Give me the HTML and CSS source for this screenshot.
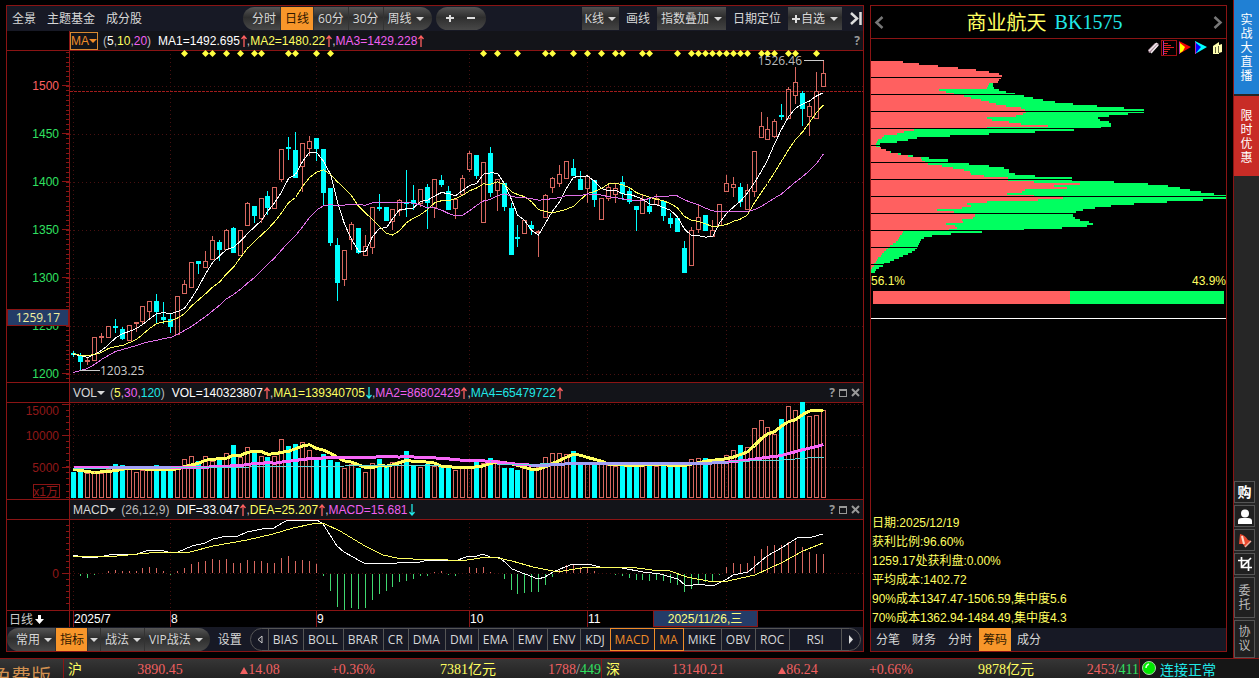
FILE: index.html
```html
<!DOCTYPE html>
<html lang="zh-CN">
<head>
<meta charset="utf-8">
<title>商业航天 BK1575</title>
<link rel="stylesheet" href="styles.css">
</head>
<body>
<svg class="defs" width="0" height="0">
  <symbol id="rise" viewBox="0 0 6 12"><path d="M3 1v11M0.500 4l2.500-3 2.500 3" fill="none" stroke="currentColor" stroke-width="1.300"/></symbol>
  <symbol id="fall" viewBox="0 0 6 12"><path d="M3 0v11M0.500 8l2.500 3 2.500-3" fill="none" stroke="currentColor" stroke-width="1.300"/></symbol>
</svg>
<div class="workspace">
  <main class="panel charts">
    <nav class="toolbar">
      <button class="plain">全景</button>
      <button class="plain">主题基金</button>
      <button class="plain">成分股</button>
      <div class="pill periods">
        <button>分时</button><button class="on">日线</button><button>60分</button><button>30分</button><button>周线<i class="caret"></i></button>
      </div>
      <div class="pill zoomers"><button aria-label="放大"><svg width="9" height="9"><path d="M3 1h2v2h3v2h-3v3h-2v-3h-3v-2h3z"/></svg></button><button aria-label="缩小"><svg width="9" height="9"><path d="M0 3h8v2h-8z"/></svg></button></div>
      <div class="actions">
        <button class="drop tight">K线<i class="caret"></i></button>
        <button class="plain">画线</button>
        <button class="drop">指数叠加<i class="caret"></i></button>
        <button class="plain">日期定位</button>
        <button class="drop"><svg width="9" height="8"><path d="M3 0h2v3h3v2h-3v3h-2v-3h-3v-2h3z"/></svg>自选<i class="caret"></i></button>
        <button class="plain collapse" aria-label="收起"><svg width="12" height="13"><path d="M1 1l6 5.500l-6 5.500M10.500 0v13" fill="none" stroke="#ddd" stroke-width="2.500"/></svg></button>
      </div>
    </nav>

    <header class="readout">
      <button class="name boxed">MA<i class="caret"></i></button>
      <span class="params dim">(<b class="w">5</b>,<b class="y">10</b>,<b class="m">20</b>)</span>
      <span class="values"><b class="w">MA1=1492.695</b><svg class="arrow r"><use href="#rise"/></svg>,<b class="y">MA2=1480.22</b><svg class="arrow r"><use href="#rise"/></svg>,<b class="m">MA3=1429.228</b><svg class="arrow r"><use href="#rise"/></svg></span>
      <span class="tools"><button aria-label="帮助">?</button></span>
    </header>
    <svg class="plot price" id="price"></svg>

    <header class="readout">
      <button class="name">VOL<i class="caret"></i></button>
      <span class="params dim">(<b class="y">5</b>,<b class="m">30</b>,<b class="c">120</b>)</span>
      <span class="values"><b class="w">VOL=140323807</b><svg class="arrow r"><use href="#rise"/></svg>,<b class="y">MA1=139340705</b><svg class="arrow c"><use href="#fall"/></svg>,<b class="m">MA2=86802429</b><svg class="arrow r"><use href="#rise"/></svg>,<b class="c">MA4=65479722</b><svg class="arrow r"><use href="#rise"/></svg></span>
      <span class="tools"><button aria-label="帮助">?</button><button aria-label="最大化"><svg width="8" height="8"><path d="M0 0h8v8h-8zM1 2v5h6v-5z" fill-rule="evenodd"/></svg></button><button aria-label="关闭"><svg width="9" height="9"><path d="M1 1l7 7M8 1l-7 7" stroke="#999" stroke-width="2"/></svg></button></span>
    </header>
    <svg class="plot volume" id="volume"></svg>

    <header class="readout">
      <button class="name">MACD<i class="caret"></i></button>
      <span class="params dim">(26,12,9)</span>
      <span class="values"><b class="w">DIF=33.047</b><svg class="arrow r"><use href="#rise"/></svg>,<b class="y">DEA=25.207</b><svg class="arrow r"><use href="#rise"/></svg>,<b class="m">MACD=15.681</b><svg class="arrow c"><use href="#fall"/></svg></span>
      <span class="tools"><button aria-label="帮助">?</button><button aria-label="最大化"><svg width="8" height="8"><path d="M0 0h8v8h-8zM1 2v5h6v-5z" fill-rule="evenodd"/></svg></button><button aria-label="关闭"><svg width="9" height="9"><path d="M1 1l7 7M8 1l-7 7" stroke="#999" stroke-width="2"/></svg></button></span>
    </header>
    <svg class="plot macd" id="macd"></svg>
    <svg class="plot dates" id="dates"></svg>

    <nav class="toolbar lower">
      <div class="pill groups">
        <button>常用<i class="caret"></i></button><button class="on">指标</button><button class="slim" aria-label="更多指标"><i class="caret"></i></button><button>战法<i class="caret"></i></button><button>VIP战法<i class="caret"></i></button>
      </div>
      <button class="plain">设置</button>
      <div class="indicators">
        <button class="prev" aria-label="向左"><svg width="6" height="9"><path d="M5 1v7l-4-3.500z" fill="none" stroke="#ccc"/></svg></button><button>BIAS</button><button>BOLL</button><button>BRAR</button><button>CR</button><button>DMA</button><button>DMI</button><button>EMA</button><button>EMV</button><button>ENV</button><button>KDJ</button><button class="picked">MACD</button><button class="picked">MA</button><button>MIKE</button><button>OBV</button><button>ROC</button><button class="wide">RSI</button><button class="next" aria-label="向右"><svg width="6" height="9"><path d="M1 0v9l4-4.500z" fill="#ddd"/></svg></button>
      </div>
    </nav>
  </main>

  <aside class="panel chips">
    <header class="stock">
      <button aria-label="上一个"><svg width="10" height="13"><path d="M8.500 1l-6 5.500l6 5.500" fill="none" stroke="#777" stroke-width="2.500"/></svg></button>
      <h1>商业航天<span>BK1575</span></h1>
      <button aria-label="下一个"><svg width="10" height="13"><path d="M1.500 1l6 5.500l-6 5.500" fill="none" stroke="#777" stroke-width="2.500"/></svg></button>
    </header>
    <div class="chip-tools">
      <button aria-label="编辑"><svg width="16" height="16"><path d="M4 13l-1-3 7-7 3 0 1 2-7 7z" fill="#a08090"/><path d="M4 11l8-8M6 13l7-8" stroke="#f0e8ec" stroke-width="1.500"/></svg></button>
      <button class="sel" aria-label="筹码分布"><svg width="14" height="14"><path d="M1.500 0v14" stroke="#b030b0"/><path d="M2 2.500h4M2 4.500h7M2 6.500h10M2 8.500h6M2 10.500h4M2 12.500h3" stroke="#e02020"/></svg></button>
      <button aria-label="远期成本"><svg width="16" height="16"><path d="M2 1l12 6-12 7z" fill="#f00000"/><path d="M3 3l5 4-2 4-3 2z" fill="#ff0"/><path d="M2.500 2v12" stroke="#b030b0"/></svg></button>
      <button aria-label="近期成本"><svg width="16" height="16"><path d="M2 1l12 6-12 7z" fill="#0ff"/><path d="M3 3l5 4-5 6z" fill="#00f"/><path d="M2.500 2v12" stroke="#b030b0"/></svg></button>
      <button aria-label="设置"><svg width="16" height="16"><path d="M4 6l6-4v3l3-1v8l-3 1v1l-6 0z" fill="#ffffb0"/><path d="M6.500 7v6M9.500 6v7" stroke="#666640"/></svg></button>
    </div>
    <svg class="profile" id="profile"></svg>
    <div class="split-labels"><span>56.1%</span><span>43.9%</span></div>
    <div class="split"><i class="gain"></i><i class="loss"></i></div>
    <div class="facts">
      <p>日期:2025/12/19</p>
      <p>获利比例:96.60%</p>
      <p>1259.17处获利盘:0.00%</p>
      <p>平均成本:1402.72</p>
      <p>90%成本1347.47-1506.59,集中度5.6</p>
      <p>70%成本1362.94-1484.49,集中度4.3</p>
    </div>
    <nav class="tabs"><button>分笔</button><button>财务</button><button>分时</button><button class="on">筹码</button><button>成分</button></nav>
  </aside>

  <aside class="rail">
    <a class="promo blue" href="#live"><span>实战大直播</span></a>
    <a class="promo red" href="#offer"><span>限时优惠</span></a>
    <div class="rail-tools">
      <button class="buy">购</button>
      <button aria-label="用户"><svg width="14" height="15"><circle cx="7" cy="4.500" r="4" fill="#fff"/><path d="M0 15v-3q0-3 4-3h6q4 0 4 3v3z" fill="#fff"/></svg></button>
      <button aria-label="提醒"><svg width="14" height="15"><path d="M2 1q5 1 8 6l3 1-6 6-2-3-4 0z" fill="#e84a30"/><path d="M4 3l2 8" stroke="#ffd8c8" stroke-width="2"/><path d="M7 14l6-6" stroke="#f0b0a0" stroke-width="1.500"/></svg></button>
      <button aria-label="截图"><svg width="14" height="14"><path d="M3.500 0v10.500h10.500M0 3.500h10.500v10.500M4 10l9-9" fill="none" stroke="#fff" stroke-width="1.700"/></svg></button>
      <button class="tall">委托</button>
      <button class="tall last">协议</button>
    </div>
  </aside>
</div>

<footer class="status">
  <div class="edition"><span>免费版</span></div>
  <div class="market"><span class="y">沪</span><span>3890.45</span><span><i class="up"></i>14.08</span><span>+0.36%</span><span class="y">7381亿元</span><span class="end">1788<b class="dim">/</b><b class="g">449</b></span></div>
  <div class="market"><span class="y">深</span><span>13140.21</span><span><i class="up"></i>86.24</span><span>+0.66%</span><span class="y">9878亿元</span><span class="end">2453<b class="dim">/</b><b class="g">411</b></span></div>
  <div class="link"><svg width="14" height="14"><circle cx="7" cy="7" r="6.500" fill="#00e800" stroke="#a8d8a8"/><path d="M4 7q0-3 3-4" fill="none" stroke="#d8ffd8" stroke-width="1.500"/></svg>连接正常</div>
</footer>
<script src="charts.js"></script>
</body>
</html>
```
FILE: styles.css
```css
* { box-sizing: border-box; }
body {
  margin: 0; height: 100vh; display: flex; flex-direction: column; overflow: hidden;
  background: #000; color: #ccc;
  font: 12px/16px "Liberation Sans", "Noto Sans CJK SC", sans-serif;
}
button {
  margin: 0; padding: 0; border: 0; background: none; color: #d8d8d8;
  font: 12px/16px "Open Sans", "Noto Sans CJK SC", sans-serif; white-space: nowrap;
}
b, i { font-weight: normal; font-style: normal; }
svg { display: block; fill: #ddd; }
.defs { display: none; }
.w { color: #fff; } .y { color: #ffff60; } .m { color: #f060f0; } .c { color: #20e8e8; }
.r { color: #ff6060; } .g { color: #30e060; } .dim { color: #bbb; }
.caret { display: inline-block; margin-left: 4px; vertical-align: 2px; border: 4px solid transparent; border-top-color: currentColor; border-bottom: 0; }

.workspace { flex: 1; min-height: 0; display: flex; }
.panel { border: 1px solid #8a1414; margin: 5px 0 6px; display: flex; flex-direction: column; min-width: 0; }
.charts { flex: 1; margin-left: 6px; }
.chips { width: 357px; margin-left: 6px; margin-right: 6px; }

.toolbar { flex: none; height: 25px; display: flex; align-items: center; padding-left: 5px; gap: 11px; background: #171925; overflow: hidden; }
.pill { display: flex; height: 23px; border-radius: 12px; overflow: hidden; background: linear-gradient(#555, #2e2e2e 45%, #484848); }
.pill button { padding: 0 4px; border-right: 1px solid #333; }
.pill button:last-child { border-right: 0; }
.pill .on, .tabs .on { background: #f8962a; color: #301800; }
.periods { margin-left: 90px; }
.periods button:first-child { padding-left: 9px; }
.periods button:last-child { padding-right: 8px; }
.zoomers { margin-left: -7px; }
.zoomers button { border: 0; padding: 0 6px 0 10px; }
.zoomers button + button { padding: 0 10px 0 6px; }
.actions { margin-left: auto; display: flex; align-items: center; gap: 7px; padding-right: 1px; }
.actions .drop { display: flex; align-items: center; height: 23px; padding: 0 4px; background: linear-gradient(#505050, #2c2c2c 45%, #444); }
.actions .caret { margin-left: 5px; }
.actions .tight { padding: 0 3px; }
.actions .tight .caret { margin-left: 4px; }
.collapse { margin-left: 1px; }

.readout { flex: none; height: 19px; margin-left: 62px; border-left: 1px solid #8a1414; background: #131419; display: flex; align-items: center; padding-left: 3px; color: #ccc; }
.readout .name { font-family: "Liberation Sans", sans-serif; }
.readout .caret { margin-left: 0; }
.readout .boxed { margin-left: -3px; border: 1px solid #d88830; color: #f08c28; }
.params { margin-left: 5px; }
.values { margin-left: 7px; white-space: nowrap; }
.arrow { display: inline-block; width: 6px; height: 12px; margin-left: 1px; vertical-align: -2px; }
.tools { margin-left: auto; display: flex; align-items: center; gap: 4px; padding-right: 3px; }
.tools svg { fill: #999; }
.tools button { color: #999; font-weight: bold; }

.plot { width: 100%; flex: none; overflow: hidden; }
.price { flex: 1 1 0; min-height: 0; }
.volume { height: 98px; }
.macd { height: 91px; }
.dates { height: 17px; }
.plot text { font: 12px "Liberation Sans", "Noto Sans CJK SC", sans-serif; }
.plot text.mark { font-family: "Open Sans", sans-serif; }

.lower { height: 24px; padding-left: 0; gap: 8px; line-height: 18px; }
.lower button { padding-top: 1px; }
.groups button { padding: 1px 3px 0 4px; }
.groups button:first-child { padding-left: 9px; }
.groups button:last-child { padding-right: 7px; }
.groups .slim { padding: 1px 2px 0; }
.groups .slim .caret { margin-left: 0; }
.indicators { flex: 1; display: flex; height: 23px; margin-right: 2px; border: 1px solid #555; border-radius: 12px; }
.indicators button { padding: 1px 5px 0 4px; border-right: 1px solid #555; }
.indicators .prev { padding: 0 5px 0 6px; }
.indicators .next { border: 0; padding: 0 6px; }
.indicators .wide { flex: 1; }
.indicators .picked { margin: -1px 0 -1px -1px; padding: 1px 5px 0 4px; border: 1px solid #f08c28; color: #f08c28; }

.stock { flex: none; height: 33px; display: flex; align-items: center; justify-content: space-between; padding: 0 3px; border-bottom: 1px solid #8a1414; }
.stock h1 { display: flex; gap: 8px; margin: 0; padding-right: 8px; font: 20px/28px "Noto Sans CJK SC", sans-serif; color: #ffff60; }
.stock h1 span { font-family: "Liberation Serif", serif; color: #20e8e8; }
.chip-tools { flex: none; height: 18px; display: flex; justify-content: flex-end; align-items: center; padding-right: 1px; }
.chip-tools .sel { border: 1px solid #a01010; }
.profile { width: 100%; flex: none; height: 217px; }
.split-labels { display: flex; justify-content: space-between; line-height: 14px; color: #ffff60; }
.split { flex: none; display: flex; height: 31px; padding: 3px 2px 14px; border-bottom: 1px solid #fff; }
.gain { flex: 561; background: #ff6060; }
.loss { flex: 439; background: #00ff60; }
.facts { margin-top: auto; padding-left: 1px; color: #ffff60; }
.facts p { margin: 0; line-height: 19px; }
.tabs { flex: none; height: 23px; display: flex; align-items: stretch; background: #171925; }
.tabs button { padding: 1px 6px 0; }
.tabs button:first-child { padding-left: 5px; }
.tabs .on { padding: 1px 4px 0; margin: 0 0 0 1px; }

.rail { width: 26px; border-left: 1px solid #8a1414; background: #262626; display: flex; flex-direction: column; }
.promo { display: flex; justify-content: center; align-items: center; color: #fff; text-decoration: none; font: 12px/14px "Noto Sans CJK SC", sans-serif; }
.promo span { width: 12px; }
.blue { background: #2080d4; height: 94px; }
.red { background: #c82c26; height: 80px; margin-top: 2px; }
.rail-tools { margin-top: auto; display: flex; flex-direction: column; gap: 2px; width: 21px; }
.rail-tools button { height: 22px; border: 1px solid #555; background: #202020; display: flex; align-items: center; justify-content: center; }
.rail-tools .buy { color: #fff; font-size: 14px; font-weight: bold; }
.rail-tools .tall { height: 41px; line-height: 14px; white-space: normal; width: 21px; padding: 0 3px; color: #bbb; }
.rail-tools .last { height: 38px; }

.status { flex: none; height: 20px; overflow: hidden; display: flex; border-top: 1px solid #8a1414; background: linear-gradient(#363636, #222); font: 14px/22px "Liberation Serif", "Noto Sans CJK SC", serif; }
.edition { width: 63px; font: 20px/34px "Noto Sans CJK SC", sans-serif; color: #d09050; }
.edition span { display: block; width: 51px; direction: rtl; white-space: nowrap; overflow: hidden; }
.market { flex: 1; display: grid; grid-template-columns: 46px 100fr 100fr 86fr 144fr 61fr; border-left: 1px solid #8a1414; color: #f06060; text-align: center; white-space: nowrap; }
.market .y:first-child { text-align: left; padding-left: 4px; }
.market .end { text-align: right; }
.up { display: inline-block; border: 4px solid transparent; border-bottom: 7px solid #f06060; border-top: 0; }
.link { width: 120px; display: flex; align-items: flex-start; gap: 4px; padding: 2px 0 0 2px; border-left: 1px solid #8a1414; background: #161616; color: #20e8e8; line-height: 20px; }
```
FILE: charts.js
```js
const NS = 'http://www.w3.org/2000/svg';
const RED = '#d86860', CYAN = '#00ffff', LINE = '#8a1414', GRID = '#481010';
const WHITE = '#ffffff', YELLOW = '#ffff60', MAGENTA = '#e070e8';
const MONTHS = [0, 14, 35, 57, 74, 94];

/* Every plot shares one drawing space; its group is moved to the plot's origin. */
function canvas(id, top) {
  const svg = document.getElementById(id);
  const g = document.createElementNS(NS, 'g');
  g.setAttribute('transform', `translate(-7,${-top})`);
  svg.appendChild(g);
  return g;
}
function add(g, tag, attrs, text) {
  const el = document.createElementNS(NS, tag);
  for (const k in attrs) el.setAttribute(k, attrs[k]);
  if (text !== undefined) el.textContent = text;
  g.appendChild(el);
  return el;
}
const px = i => Math.round(73 + i * 750 / 108);
const rect = (g, x, y, w, h, fill) => add(g, 'rect', { x, y, width: w, height: h, fill });
const box = (g, x, y, w, h, stroke, fill = 'none') =>
  add(g, 'rect', { x: x + 0.5, y: y + 0.5, width: w - 1, height: h - 1, fill, stroke });
const rule = (g, x1, y1, x2, y2, stroke, dash) =>
  add(g, 'line', { x1, y1, x2, y2, stroke, ...(dash ? { 'stroke-dasharray': dash } : {}) });
const label = (g, x, y, fill, text, anchor = 'end', cls = '') =>
  add(g, 'text', { x, y, fill, 'text-anchor': anchor, class: cls }, text);
const path = (g, pts, stroke, width = 1) =>
  add(g, 'polyline', { points: pts.map(p => p.join(',')).join(' '), fill: 'none', stroke, 'stroke-width': width, 'shape-rendering': 'crispEdges' });
const average = (list, n, lead) => list.map((v, i) =>
  i < n - 1 ? lead[Math.min(i, lead.length - 1)] : list.slice(i - n + 1, i + 1).reduce((a, b) => a + b) / n);
const series = (g, list, color, width) => path(g, list.map((y, i) => [px(i) + 0.5, y + 0.5]), color, width);

function frame(g, top, bottom, rows) {
  MONTHS.forEach(i => rule(g, px(i) + 0.5, top, px(i) + 0.5, bottom, GRID, '1 3'));
  rows.forEach(y => rule(g, 70, y + 0.5, 3000, y + 0.5, GRID, '1 3'));
  rule(g, 69.5, top, 69.5, bottom, LINE);
  rule(g, 0, top + 0.5, 3000, top + 0.5, LINE);
  rule(g, 0, bottom - 0.5, 3000, bottom - 0.5, LINE);
}
function ticks(g, from, to, step) {
  for (let y = from; y < to; y += step) rect(g, 66, Math.round(y), 3, 1, LINE);
}

/* direction, high, body top, body bottom, low */
const candles = `d351 353 355 357,d353 356 362 370,u357 360 361 365,u337 337 360 361,u333 336 337 343,u326 326 337 337,d319 326 328 333,d327 329 339 340,u325 325 340 340,u322 322 324 332,
u306 306 321 324,u301 301 311 320,d294 301 312 323,d302 317 320 324,d313 319 327 333,u296 296 334 334,u280 284 293 294,u262 262 287 287,d261 261 264 274,u251 261 267 267,
u236 240 259 259,d240 242 250 261,u229 230 249 249,d227 228 253 253,u230 230 255 255,u202 203 225 226,d206 206 216 223,u198 198 218 223,d191 196 208 215,u187 187 208 209,
u149 149 179 182,d137 147 148 160,d132 150 178 178,u143 143 166 192,u136 141 148 156,d138 138 149 161,d149 149 193 206,d188 188 243 246,d238 245 283 301,u250 250 279 286,
u222 224 239 250,d228 228 253 254,u235 246 255 255,u207 207 247 254,d194 207 209 211,d207 207 221 221,u209 209 221 230,u199 200 210 216,d170 202 203 217,d185 200 204 210,
u189 189 203 207,d184 187 203 229,u179 179 207 218,d175 180 185 187,d186 191 210 210,u199 199 208 219,u175 178 194 194,u151 153 169 172,d155 155 176 179,u162 162 222 222,
d147 153 193 197,u179 179 190 211,d183 183 207 211,d203 208 255 255,d225 237 238 247,u220 220 233 233,d221 225 229 235,u230 231 233 257,u194 195 217 217,u177 178 187 193,
u165 174 183 187,u161 161 178 178,d159 168 176 176,d171 179 190 190,u176 176 188 203,d180 180 200 207,u198 198 219 219,u185 187 198 201,u184 188 194 203,d176 182 194 200,
d187 191 202 204,d206 206 210 231,u194 199 213 213,d197 206 212 214,u194 198 204 204,d201 201 216 221,d213 218 224 228,d218 218 232 232,d241 248 273 273,u227 230 265 265,
u204 217 229 233,d215 215 231 231,u220 230 236 236,u204 204 225 225,u175 183 191 191,u177 184 187 197,d183 187 202 207,u184 190 209 209,u151 151 191 197,u112 126 137 137,
u117 129 139 139,u119 121 136 138,d104 115 117 120,u87 89 118 118,u67 82 95 104,d91 93 109 126,u103 106 116 136,u72 91 118 118,u60 73 86 86`
  .split(',').map(s => { s = s.trim(); return [s[0], ...s.slice(1).split(' ').map(Number)]; });
const closes = candles.map(c => c[0] === 'u' ? c[2] : c[3]);

{
  const g = canvas('price', 50);
  frame(g, 50, 383, [86, 134, 182, 230, 278, 326, 374]);
  ticks(g, 52, 381, 4.8);
  [1500, 1450, 1400, 1350, 1300, 1250, 1200].forEach((v, k) => {
    rect(g, 62, 85 + 48 * k, 7, 1, LINE);
    label(g, 59, 90 + 48 * k, v === 1500 ? '#ff6060' : '#30e060', v);
  });
  for (let x = 70; x < 3000; x += 4) rect(g, x, 91, 3, 1, '#a01c1c');
  candles.forEach(([dir, high, top, bottom, low], i) => {
    const x = px(i), color = dir === 'u' ? RED : CYAN, h = bottom - top + 1;
    if (high < top) rect(g, x, high, 1, top - high, color);
    if (low > bottom) rect(g, x, bottom, 1, low - bottom, color);
    if (dir === 'u' && h > 3) box(g, x - 2, top, 5, h, color);
    else rect(g, x - 2, top, 5, Math.max(h - 1, 2), color);
  });
  series(g, average(closes, 5, [354, 355, 357, 354]), WHITE);
  series(g, average(closes, 10, [353, 355, 355, 354, 352, 348, 346, 345, 342]), YELLOW);
  series(g, average(closes, 20, [372, 370, 368, 364, 359, 355, 351, 349, 347, 345, 343, 341, 340, 338, 337, 334, 330, 326, 321]), MAGENTA);
  [16, 19, 20, 22, 24, 26, 27, 31, 32, 35, 37, 59, 61, 64, 68, 69, 72, 74, 76, 78, 79, 82, 83, 87,
    89, 90, 91, 92, 93, 94, 95, 96, 97, 99, 100, 101, 103, 104, 107].forEach(i =>
    add(g, 'path', { d: `M${px(i) - 3} 53.5l3.500-3.500 3.500 3.500-3.500 3.500z`, fill: '#ffff40' }));
  rule(g, 80, 370.5, 100, 370.5, '#ccc');
  label(g, 100, 375, '#ccc', '1203.25', 'start', 'mark');
  rule(g, 804, 60.5, 824, 60.5, '#ccc');
  label(g, 802, 65, '#bbb', '1526.46', 'end', 'mark');
  box(g, 7, 309, 62, 17, LINE, '#243c68');
  label(g, 60, 322, '#f0f0a0', '1259.17', 'end', 'mark');
}

const volumes = [472, 467, 473, 472, 473, 469, 464, 465, 469, 472, 470, 470, 465, 469, 471, 467, 459, 456, 461, 456, 461, 458, 453, 445,
  457, 447, 451, 456, 457, 456, 439, 446, 444, 442, 450, 458, 454, 460, 462, 468, 464, 468, 472, 463, 459, 466, 462, 461, 451, 465, 467, 464,
  466, 467, 467, 470, 467, 466, 461, 463, 458, 460, 468, 468, 470, 468, 470, 467, 457, 453, 453, 454, 451, 463, 464, 462, 464, 465, 466, 465,
  464, 464, 464, 463, 466, 465, 465, 465, 464, 459, 458, 458, 460, 460, 455, 450, 445, 447, 428, 420, 427, 434, 419, 406, 410, 402, 416, 415, 410];

{
  const g = canvas('volume', 402);
  frame(g, 402, 500, [404, 435, 467]);
  ticks(g, 410, 498, 6.2);
  [[404, 415, '15000'], [435, 440, '10000'], [467, 472, '5000']].forEach(([y, base, text]) => {
    rect(g, 62, y, 7, 1, LINE);
    label(g, 59, base, '#901818', text);
  });
  box(g, 33, 484, 27, 14, LINE);
  label(g, 58, 496, '#901818', 'x1万');
  volumes.forEach((y, i) => {
    if (candles[i][0] === 'u') box(g, px(i) - 2, y, 5, 498 - y, RED);
    else rect(g, px(i) - 2, y, 5, 498 - y, CYAN);
  });
  const lead = [...Array(20).fill(467), 466, 466, 466, 465, 465, 464, 463, 463, 462];
  const slow = average(volumes, 30, lead);
  series(g, average(volumes, 5, [469, 470, 471, 472]), YELLOW, 3);
  series(g, slow, '#f868f8', 3);
  path(g, [[73, 469], [170, 468], [250, 467], [440, 465], [497, 465], [540, 464], [660, 463], [730, 462], [750, 461], [783, 460], [807, 458], [824, 457]], '#60d8d8');
  [[5, 14], [66, 94]].forEach(([a, b]) =>
    path(g, slow.slice(a, b + 1).map((y, i) => [px(a + i) + 0.5, y + 0.5]), '#a0a0f8', 3));
}

const bars = [0, -2, -4, -1, 0, 2, 3, 2, 2, 2, 5, 6, 5, 2, -1, 2, 5, 9, 11, 12, 14, 13, 14, 10, 10, 13, 12, 12, 10, 10, 15, 17, 12, 13, 12, 9,
  -2, -17, -33, -36, -34, -35, -34, -26, -20, -17, -13, -8, -7, -5, -2, -2, 1, 2, -1, -2, 0, 6, 5, 6, 1, 0, -5, -16, -20, -19, -18, -18, -11, -3,
  3, 8, 8, 6, 6, 2, 0, 0, -1, -2, -4, -6, -6, -7, -6, -7, -9, -11, -18, -15, -10, -8, -7, -1, 6, 10, 9, 10, 17, 24, 27, 28, 28, 31, 32, 26, 21, 19, 19];

{
  const g = canvas('macd', 519);
  frame(g, 519, 611, [573]);
  ticks(g, 525, 609, 6);
  rect(g, 62, 573, 7, 1, LINE);
  label(g, 59, 578, '#901818', '0');
  bars.forEach((v, i) => {
    if (v > 0) rect(g, px(i), 573 - v, 1, v, RED);
    if (v < 0) rect(g, px(i), 574, 1, -v, '#40d870');
  });
  path(g, [[73, 555], [87, 558], [98, 557], [115, 554], [137, 554], [149, 550], [160, 550], [172, 553], [178, 552], [192, 546], [205, 543], [213, 539],
    [227, 536], [238, 536], [247, 532], [262, 529], [274, 528], [282, 523], [288, 520], [298, 521], [317, 520], [323, 524], [330, 535], [337, 546],
    [344, 552], [353, 557], [360, 561], [366, 564], [372, 563], [397, 563], [420, 562], [428, 560], [440, 560], [455, 561], [469, 556], [477, 556],
    [483, 554], [490, 557], [498, 557], [505, 562], [512, 569], [525, 574], [538, 579], [545, 577], [553, 572], [565, 567], [573, 564], [580, 565],
    [588, 564], [600, 567], [622, 568], [643, 572], [660, 574], [678, 579], [685, 585], [693, 585], [697, 584], [713, 586], [727, 579], [733, 575],
    [748, 572], [767, 556], [783, 547], [797, 538], [812, 537], [823, 534]], WHITE);
  path(g, [[73, 556], [117, 556], [160, 552], [190, 552], [213, 546], [247, 540], [273, 534], [293, 528], [317, 523], [325, 524], [340, 531], [365, 546],
    [383, 555], [397, 558], [428, 560], [440, 559], [455, 561], [467, 560], [487, 557], [498, 558], [512, 561], [533, 567], [553, 571], [563, 571],
    [588, 567], [630, 567], [652, 570], [670, 571], [687, 577], [713, 582], [728, 581], [755, 575], [783, 562], [803, 551], [823, 543]], YELLOW);
}

{
  const g = canvas('dates', 610);
  rule(g, 0, 610.5, 3000, 610.5, LINE);
  rule(g, 69.5, 610, 69.5, 627, LINE);
  label(g, 9, 624, '#ccc', '日线', 'start');
  add(g, 'path', { d: 'M38 615h3v4h3l-4.500 5-4.500-5h3z', fill: '#fff' });
  ['2025/7', '8', '9', '10', '11'].forEach((text, k) => {
    rule(g, px(MONTHS[k]) + 0.5, 611, px(MONTHS[k]) + 0.5, 627, LINE);
    label(g, px(MONTHS[k]) + 1, 623, '#fff', text, 'start');
  });
  box(g, 653, 610, 105, 17, LINE, '#243c68');
  label(g, 705, 623, '#ffff80', '2025/11/26,三', 'middle');
}

/* total width, profitable width; one pair per two-pixel price step */
const profile = `32 32,48 48,67 67,87 87,105 105,118 118,128 128,131 131,130 130,128 128,127 127,122 118,122 117,123 116,128 68,135 75,144 83,153 93,162 100,172 110,
184 118,202 125,226 135,253 150,273 154,273 155,257 152,238 145,227 116,229 121,238 138,240 150,240 177,230 116,203 43,164 33,118 26,79 13,46 11,37 7,26 6,9 5,9 5,
10 10,15 15,20 19,30 27,42 37,58 50,77 51,77 54,98 57,118 71,133 82,138 93,138 99,144 100,164 113,201 137,201 137,243 163,277 209,297 183,309 196,319 154,330 151,
343 136,355 163,355 192,332 167,296 116,263 96,240 100,224 91,212 66,205 83,202 104,202 104,204 102,209 91,218 92,222 75,216 84,191 86,153 78,111 32,80 31,
61 29,53 28,50 27,49 25,48 22,47 19,46 17,44 15,41 13,37 11,32 10,28 7,23 6,19 5,13 3,12 3,8 1,5 0,4 0`.split(',').map(s => s.trim().split(' ').map(Number));
{
  const svg = document.getElementById('profile');
  profile.forEach(([all, gain], k) => {
    rect(svg, 0, 4 + 2 * k, all, 2, '#00ff60');
    rect(svg, 0, 4 + 2 * k, gain, 2, '#ff6060');
  });
  for (let y = 20; y < 217; y += 17) rect(svg, 0, y, 356, 1, '#000');
}
```
